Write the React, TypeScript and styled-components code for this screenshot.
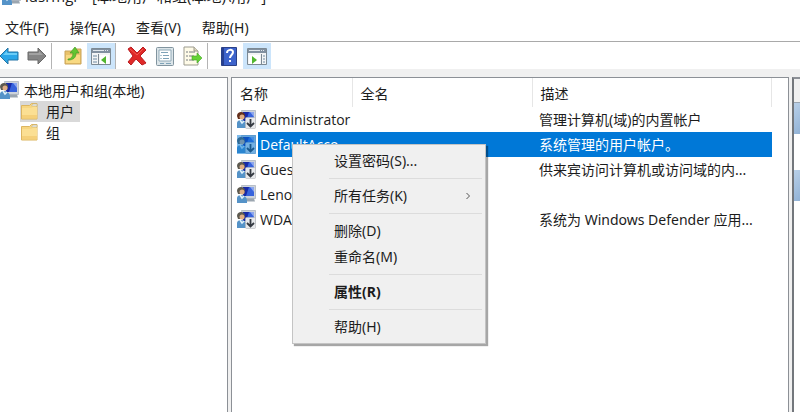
import React from "react";
import styled, { createGlobalStyle } from "styled-components";

const GlobalStyle = createGlobalStyle`
  * { box-sizing: border-box; }
  html, body { margin: 0; overflow: hidden; }
  body, button, table {
    font-family: "Noto Sans", "Noto Sans CJK SC", sans-serif;
    font-size: 14px;
    line-height: 20px;
    color: #1c1c1c;
  }
`;

const Window = styled.div`
  position: relative;
  display: flex;
  flex-direction: column;
  height: 100vh;
  overflow: hidden;
  background: #f0f0f0;
`;

const TitleBar = styled.header`
  display: flex;
  flex: none;
  align-items: center;
  gap: 4px;
  height: 30px;
  margin-top: -19px;
  padding-left: 2px;
  background: #fff;
  font-family: "Open Sans", "Noto Sans CJK SC", sans-serif;
  font-size: 15px;
  white-space: nowrap;
`;

const MenuBar = styled.nav`
  display: flex;
  flex: none;
  gap: 21px;
  height: 31px;
  padding-left: 5px;
  background: #fff;
  border-bottom: 1px solid #a9a9a9;
`;

const MenuButton = styled.button`
  padding: 3px 0 0;
  border: 0;
  background: none;
  white-space: nowrap;
`;

const Toolbar = styled.div`
  display: flex;
  flex: none;
  height: 27px;
  margin-bottom: 8px;
  padding-top: 1px;
  background: #fff;
`;

const ToolGroup = styled.div`
  display: flex;
  margin-right: 7px;
  border-right: 1px solid #b4b4b4;

  &:first-child { margin-left: -5px; }
  &:last-child { border-right: 0; }
`;

const ToolButton = styled.button<{ $pressed?: boolean }>`
  display: flex;
  align-items: center;
  justify-content: center;
  width: 28px;
  height: 26px;
  padding: 0;
  border: 0;
  background: ${(p) => (p.$pressed ? "#cce5fb" : "transparent")};
`;

const Panes = styled.main`
  display: grid;
  grid-template-columns: 228px 1fr 8px;
  gap: 3px;
  flex: 1;
  min-height: 0;
`;

const Pane = styled.section`
  min-width: 0;
  overflow: hidden;
  background: #fff;
  border: solid #8c9096;
  border-width: 1px 1px 0;
`;

const TreePane = styled(Pane)`
  border-left: 0;
  padding-top: 2px;
`;

const Tree = styled.ul`
  margin: 0;
  padding: 0;
  list-style: none;
`;

const Branch = styled(Tree)`
  padding-left: 20px;
`;

const TreeItem = styled.button<{ $selected?: boolean; $root?: boolean }>`
  display: flex;
  align-items: center;
  gap: ${(p) => (p.$root ? 5 : 8)}px;
  height: 21px;
  padding: ${(p) => (p.$root ? "0" : "0 6px 0 1px")};
  border: 0;
  background: ${(p) => (p.$selected ? "#d9d9d9" : "transparent")};
  white-space: nowrap;
`;

const UserTable = styled.table`
  width: calc(100% - 16px);
  table-layout: fixed;
  border-collapse: collapse;
`;

const Column = styled.col<{ $width?: number }>`
  width: ${(p) => (p.$width ? `${p.$width}px` : "auto")};
`;

const Heading = styled.th`
  height: 29px;
  padding: 2px 0 0 8px;
  border-right: 1px solid #e6e6e6;
  font-weight: 400;
  text-align: left;
`;

const Cell = styled.td<{ $selected?: boolean }>`
  height: 25px;
  padding: 0 0 0 7px;
  overflow: hidden;
  background: ${(p) => (p.$selected ? "#0078d7" : "transparent")};
  color: ${(p) => (p.$selected ? "#fff" : "inherit")};
  white-space: nowrap;
`;

const NameCell = styled(Cell)`
  padding: 0;
  background: none;
  font-family: "Open Sans", "Noto Sans CJK SC", sans-serif;
`;

const UserName = styled.div<{ $selected?: boolean }>`
  display: flex;
  align-items: center;
  gap: 4px;
  height: 25px;
  padding-left: 5px;
  background: ${(p) =>
    p.$selected ? "linear-gradient(90deg, #fff 26px, #0078d7 26px)" : "none"};
`;

const ActionPane = styled.aside`
  background: #fff;
  border-top: 2px solid #8c9096;
  border-left: 2px solid #73777c;
  overflow: hidden;
`;

const ActionTitle = styled.div`
  height: 24px;
  background: #f0f0f0;
  border-bottom: 1px solid #9aa5b0;
`;

const ActionBand = styled.div`
  height: 31px;
  margin-bottom: 36px;
  background: linear-gradient(135deg, #b9d0e8, #91b2d6);
`;

const ContextMenu = styled.div`
  position: absolute;
  top: 144px;
  left: 292px;
  width: 194px;
  padding: 3px 2px;
  background: #f0f0f0;
  border: 1px solid #c4c4c4;
  box-shadow: 2px 2px 1px rgba(0, 0, 0, 0.35);
`;

const ContextItem = styled.button<{ $bold?: boolean }>`
  display: flex;
  align-items: center;
  justify-content: space-between;
  width: 100%;
  height: 26px;
  padding: 0 12px 0 39px;
  border: 0;
  background: none;
  font-weight: ${(p) => (p.$bold ? 700 : 400)};
`;

const Separator = styled.hr`
  height: 1px;
  margin: 4px 1px 4px 34px;
  border: 0;
  background: #dcdcdc;
`;

const Arrow = ({ forward = false }: { forward?: boolean }) => (
  <svg width="20" height="18" viewBox="0 0 20 18" aria-hidden="true">
    <path
      d={forward ? "M19 9 11 1v4H1v8h10v4z" : "M1 9l8-8v4h10v8H9v4z"}
      fill={forward ? "#858585" : "#2ba6e8"}
      stroke={forward ? "#686868" : "#2475a5"}
      strokeLinejoin="round"
    />
    <path d={forward ? "M2 6h10V4l4 4H2z" : "M4 8l4-4v2h10v2z"} fill={forward ? "#a2a2a2" : "#6bcdf7"} />
  </svg>
);

const FolderUp = () => (
  <svg width="18" height="20" viewBox="0 0 18 20" aria-hidden="true">
    <path d="M1 5h8l2-2h6v15H1z" fill="#e9c26a" stroke="#c9a458" />
    <path d="M2 9h14v8H2z" fill="#f8d982" />
    <path d="M4 13c3 0 5-2 5-6H6l5-6 4 6h-3c0 5-3 7-8 7z" fill="#62c531" stroke="#449c27" strokeWidth=".7" />
  </svg>
);

const Layout = ({ right = false }: { right?: boolean }) => (
  <svg width="20" height="18" viewBox="0 -1 20 18" aria-hidden="true">
    <path d="M.5.5h19v16H.5z" fill="#f2f4f5" stroke="#7c8993" />
    <path d="M1 1h18v4H1z" fill="#8190a0" />
    <path d="M2 2.5h11m1 0h1m1 0h1" stroke="#e2e8ed" />
    <path d={right ? "M14.5 6v10" : "M7.5 6v10"} stroke="#7c8993" />
    <path d={right ? "M16 8h2m-2 3h2m-2 3h2" : "M2 8h4M2 11h4M2 14h4"} stroke="#6e8aa2" />
    <path d={right ? "M2 7h11v9H2z" : "M9 7h9v9H9z"} fill="#fff" />
    <path d={right ? "M5 8l5 4-5 4z" : "M15 8l-5 4 5 4z"} fill="#51b72f" />
  </svg>
);

const DeleteIcon = () => (
  <svg width="20" height="20" viewBox="0 0 20 20" aria-hidden="true">
    <path d="M1 3l3-2 6 6 6-6 3 3-6 6 6 7-4 2-6-6-5 6-3-3 5-6z" fill="#df2928" stroke="#ba1d22" strokeLinejoin="round" />
    <path d="M3 3l7 6 6-6" fill="none" stroke="#f15c51" />
  </svg>
);

const PropertiesIcon = () => (
  <svg width="18" height="19" viewBox="0 0 18 19" aria-hidden="true">
    <rect x=".5" y=".5" width="17" height="18" rx="1" fill="#dce5e9" stroke="#81949f" />
    <path d="M3 3h12v11H3z" fill="#fff" stroke="#8fa9b7" />
    <path d="M5 5.500h7M7 8.500h6m-6 3h6M4 16.500h4m2 0h5" stroke="#7fa3b8" />
    <path d="M5 8v1m0 2v1" stroke="#5f8ea9" />
  </svg>
);

const ExportIcon = () => (
  <svg width="20" height="20" viewBox="0 0 20 20" aria-hidden="true">
    <path d="M1 1h10l4 4v14H1z" fill="#fffbe8" stroke="#9c9b8f" />
    <path d="M11 1v4h4" fill="#ded8bd" stroke="#9c9b8f" />
    <path d="M3 6h2m1 0h6M3 10h2m1 0h5M3 14h2m1 0h5" stroke="#777d82" />
    <path d="M9 10h5V7l5 5-5 5v-3H9z" fill="#65d336" stroke="#43a426" strokeWidth=".6" />
  </svg>
);

const HelpIcon = () => (
  <svg width="16" height="19" viewBox="0 0 16 19" aria-hidden="true">
    <path d="M.5.5h15v18H.5z" fill="#3d63cb" stroke="#2b4188" />
    <path d="M1 1h2v17H1z" fill="#263f91" />
    <path d="M6 6c0-4 6-4 6-1 0 3-3 3-3 6" fill="none" stroke="#fff" strokeWidth="2" />
    <path d="M8 13h2v2H8z" fill="#fff" />
  </svg>
);

const FolderIcon = () => (
  <svg width="17" height="17" viewBox="0 0 17 17" aria-hidden="true">
    <path d="M.5 2.500h8l2-2h5.500v15.500H.5z" fill="#f7d681" stroke="#dcb561" />
    <path d="M10.500 3l1.500-2h4v2z" fill="#e9edf0" stroke="#c4b68c" strokeWidth=".6" />
    <path d="M1 5h9l2-1h4v11H1z" fill="#fbdf93" />
    <path d="M1 12h15v3.500H1z" fill="#f5d07a" />
  </svg>
);

interface UserIconProps {
  disabled?: boolean;
  selected?: boolean;
  tan?: boolean;
}

const UserIcon = ({ disabled = false, selected = false, tan = false }: UserIconProps) => (
  <svg width="19" height="19" viewBox="0 0 19 19" aria-hidden="true">
    <path d="M4.500.5h14v13h-12z" fill="#cdd3db" stroke="#a4adb8" strokeWidth=".7" />
    <path d="M6 2h11v9H6z" fill="#3763dc" />
    <path d="M6 2h6l-3 9H6z" fill="#1629a8" />
    <path d="M13 2h4v5z" fill="#8ba6ee" />
    <path d="M10 13.500h7l1 3H9z" fill="#9ba6b0" />
    <path d="M0 6c0-3 2-4 4-4s4 1 4 4l-1 3H1z" fill={tan ? "#64301c" : "#5d5a50"} />
    <circle cx="5" cy="7" r="2.500" fill="#dfae85" />
    <path d="M0 18v-5c0-2 2-3 4-3s6 2 6 5v3z" fill="#5593c8" />
    <path d="M3 10l2 3 2-2" fill="none" stroke="#e1f1fa" strokeWidth="1.500" />
    {disabled && (
      <>
        <rect x="8.500" y="7.500" width="10" height="11" rx="1" fill="#e7e9ec" stroke="#b5b7ba" strokeWidth=".6" />
        <path d="M13.500 9v7.500m-3.500-3.500 3.500 3.500 3.500-3.500" fill="none" stroke="#343a42" strokeWidth="1.800" />
      </>
    )}
    {selected && <path d="M0 0h19v19H0z" fill="#0078d7" opacity=".5" />}
  </svg>
);

const Chevron = () => (
  <svg width="6" height="8" viewBox="0 0 6 8" aria-hidden="true">
    <path d="M1.500 1l3 3-3 3" fill="none" stroke="#555" />
  </svg>
);

const users = [
  { name: "Administrator", description: "管理计算机(域)的内置帐户", disabled: true },
  { name: "DefaultAcco...", description: "系统管理的用户帐户。", disabled: true, selected: true },
  { name: "Guest", description: "供来宾访问计算机或访问域的内...", disabled: true },
  { name: "Lenovo", description: "", disabled: false },
  { name: "WDA...", description: "系统为 Windows Defender 应用...", disabled: true },
];

export default function App() {
  return (
    <Window>
      <GlobalStyle />
      <TitleBar>
        <UserIcon />
        <span>lusrmgr - [本地用户和组(本地)\用户]</span>
      </TitleBar>
      <MenuBar>
        {["文件(F)", "操作(A)", "查看(V)", "帮助(H)"].map((label) => (
          <MenuButton key={label}>{label}</MenuButton>
        ))}
      </MenuBar>
      <Toolbar>
        <ToolGroup>
          <ToolButton aria-label="后退"><Arrow /></ToolButton>
          <ToolButton aria-label="前进"><Arrow forward /></ToolButton>
        </ToolGroup>
        <ToolGroup>
          <ToolButton aria-label="向上"><FolderUp /></ToolButton>
          <ToolButton aria-label="显示控制台树" $pressed><Layout /></ToolButton>
        </ToolGroup>
        <ToolGroup>
          <ToolButton aria-label="删除"><DeleteIcon /></ToolButton>
          <ToolButton aria-label="属性"><PropertiesIcon /></ToolButton>
          <ToolButton aria-label="导出列表"><ExportIcon /></ToolButton>
        </ToolGroup>
        <ToolGroup>
          <ToolButton aria-label="帮助"><HelpIcon /></ToolButton>
          <ToolButton aria-label="显示操作窗格" $pressed><Layout right /></ToolButton>
        </ToolGroup>
      </Toolbar>
      <Panes>
        <TreePane>
          <Tree>
            <li>
              <TreeItem $root><UserIcon />本地用户和组(本地)</TreeItem>
              <Branch>
                <li><TreeItem $selected><FolderIcon />用户</TreeItem></li>
                <li><TreeItem><FolderIcon />组</TreeItem></li>
              </Branch>
            </li>
          </Tree>
        </TreePane>
        <Pane>
          <UserTable>
            <colgroup>
              <Column $width={120} />
              <Column $width={180} />
              <Column />
            </colgroup>
            <thead>
              <tr><Heading>名称</Heading><Heading>全名</Heading><Heading>描述</Heading></tr>
            </thead>
            <tbody>
              {users.map((user) => (
                <tr key={user.name}>
                  <NameCell $selected={user.selected}>
                    <UserName $selected={user.selected}>
                      <UserIcon disabled={user.disabled} selected={user.selected} tan={user.name === "Administrator"} />
                      {user.name}
                    </UserName>
                  </NameCell>
                  <Cell $selected={user.selected} />
                  <Cell $selected={user.selected}>{user.description}</Cell>
                </tr>
              ))}
            </tbody>
          </UserTable>
        </Pane>
        <ActionPane>
          <ActionTitle />
          <ActionBand />
          <ActionBand />
        </ActionPane>
      </Panes>
      <ContextMenu role="menu">
        <ContextItem role="menuitem">设置密码(S)...</ContextItem>
        <Separator />
        <ContextItem role="menuitem">所有任务(K)<Chevron /></ContextItem>
        <Separator />
        <ContextItem role="menuitem">删除(D)</ContextItem>
        <ContextItem role="menuitem">重命名(M)</ContextItem>
        <Separator />
        <ContextItem role="menuitem" $bold>属性(R)</ContextItem>
        <Separator />
        <ContextItem role="menuitem">帮助(H)</ContextItem>
      </ContextMenu>
    </Window>
  );
}
